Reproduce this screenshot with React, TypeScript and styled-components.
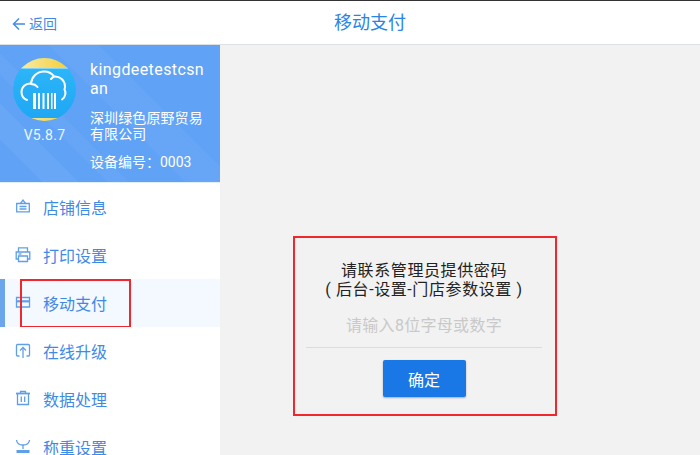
import {FC, ReactNode} from 'react'
import styled, {createGlobalStyle} from 'styled-components'

const FONT = `"Roboto", "Noto Sans CJK SC", sans-serif`

const GlobalStyle = createGlobalStyle`
  html, body {
    margin: 0;
    padding: 0;
    height: 100%;
    overflow: hidden;
    background: #f2f2f2;
    font-family: ${FONT};
  }
`

const menu: {label: string; icon: ReactNode; active?: boolean}[] = [
   {
      label: '店铺信息',
      icon: (
         <>
            <path d="M3.700 6.500h12.600v8.300H3.700z"/>
            <path d="M7.500 6.500 10 3l2.500 3.500"/>
            <path d="M6.500 9.500h7M6.500 12h7"/>
         </>
      ),
   },
   {
      label: '打印设置',
      icon: (
         <>
            <path d="M5.500 7V2.800h9V7"/>
            <path d="M5.500 14H3.200V7h13.600v7h-2.300"/>
            <path d="M5.500 11h9v5.500h-9z"/>
            <path d="M5.500 9h3"/>
         </>
      ),
   },
   {
      label: '移动支付',
      active: true,
      icon: (
         <>
            <path d="M3.500 4.500h13v9.500h-13z"/>
            <path d="M3.500 8.300h13" strokeWidth={2.200}/>
         </>
      ),
   },
   {
      label: '在线升级',
      icon: (
         <>
            <path d="M6.500 15H4.500q-1 0-1-1V4.500q0-1 1-1h11q1 0 1 1V14q0 1-1 1h-2"/>
            <path d="M10 17V6.500"/>
            <path d="M7 9.500 10 6.500l3 3"/>
         </>
      ),
   },
   {
      label: '数据处理',
      icon: (
         <>
            <path d="M3 4.500h14" strokeWidth={1.800}/>
            <path d="M7.500 4V2.500h5V4"/>
            <path d="M4.500 5v10.500h11V5"/>
            <path d="M8.300 7.500v5.500M11.700 7.500v5.500"/>
         </>
      ),
   },
   {
      label: '称重设置',
      icon: (
         <>
            <path d="M3.500 3c.3 3 1.500 5 6.500 5s6.200-2 6.500-5"/>
            <path d="M10 8v4"/>
            <path d="M3.500 14.500h13" strokeWidth={3}/>
         </>
      ),
   },
]

const App: FC = () => {
   return (
      <Page>
         <GlobalStyle/>
         <Header>
            <BackLink>
               <svg width="14" height="14" viewBox="0 0 14 14" fill="none" stroke="#3f8ae6" strokeWidth="1.400">
                  <path d="M13 7H1.500M7 1.500 1.500 7 7 12.500"/>
               </svg>
               返回
            </BackLink>
            <Title>移动支付</Title>
         </Header>
         <Body>
            <Sidebar>
               <Profile>
                  <LogoColumn>
                     <Logo/>
                     <Version>V5.8.7</Version>
                  </LogoColumn>
                  <Info>
                     <Account>kingdeetestcsnan</Account>
                     <Company>深圳绿色原野贸易有限公司</Company>
                     <Device>设备编号：0003</Device>
                  </Info>
               </Profile>
               <Menu>
                  {menu.map(item => (
                     <MenuItem key={item.label} $active={item.active}>
                        <MenuIcon viewBox="0 0 20 20">{item.icon}</MenuIcon>
                        {item.label}
                        {item.active && <MenuMark/>}
                     </MenuItem>
                  ))}
               </Menu>
            </Sidebar>
            <Content>
               <Dialog>
                  <Prompt>
                     请联系管理员提供密码<br/>( 后台-设置-门店参数设置 )
                  </Prompt>
                  <Password>请输入8位字母或数字</Password>
                  <Confirm>确定</Confirm>
               </Dialog>
            </Content>
         </Body>
      </Page>
   )
}

const Logo: FC = () => (
   <svg width="63" height="63" viewBox="0 0 63 63">
      <defs>
         <clipPath id="disc"><circle cx="31.500" cy="31.500" r="31.500"/></clipPath>
         <linearGradient id="sky" x1="0" y1="0" x2="0" y2="1">
            <stop offset="0" stopColor="#2fb8f8"/>
            <stop offset="1" stopColor="#1ea6f4"/>
         </linearGradient>
         <linearGradient id="sun" x1="0" y1="0" x2="1" y2="0">
            <stop offset="0.150" stopColor="#f7e9a0"/>
            <stop offset="0.850" stopColor="#f6cf3c"/>
         </linearGradient>
      </defs>
      <g clipPath="url(#disc)">
         <rect width="63" height="63" fill="url(#sky)"/>
         <rect width="63" height="10" fill="url(#sun)"/>
         <rect y="10" width="63" height="1" fill="#7fd4f8"/>
         <rect y="60" width="63" height="3" fill="url(#sun)"/>
      </g>
      <path
         d="M14 42c-3-1-5.500-4-5.500-8 0-5 4-9 9.500-8.500C18.500 19 24 13.500 31 13.500c4 0 8 2 10 5 6-.5 11 4 11 10 0 1-.200 2-.500 3 1.500 2.500 1.500 7-2.500 10"
         fill="none" stroke="#fff" strokeWidth="2" strokeLinecap="round"
      />
      <path d="M18 26c2.500 0 5 1 6.500 3M38 21c1-1.200 2-2 3-2.500" fill="none" stroke="#fff" strokeWidth="2" strokeLinecap="round"/>
      <path d="M20 35h3v16h-3zM25 35h2v16h-2zM29.500 35h2v16h-2zM34 35h2v16h-2zM38 35h1.500v16H38zM41 35h2v16h-2z" fill="#fff"/>
   </svg>
)

export default App

const Page = styled.div`
  width: 700px;
  height: 455px;
  overflow: hidden;
  display: flex;
  flex-direction: column;
  border-top: 1px solid #333;
  box-sizing: border-box;
`

const Header = styled.header`
  flex: none;
  height: 44px;
  box-sizing: border-box;
  padding-left: 40px;
  background: #fff;
  border-bottom: 1px solid #dcdfe4;
  display: flex;
  align-items: center;
  justify-content: center;
  position: relative;
`

const BackLink = styled.div`
  position: absolute;
  left: 12px;
  top: 15px;
  display: flex;
  align-items: center;
  gap: 3px;
  color: #3f8ae6;
  font-size: 14px;
  line-height: 16px;
`

const Title = styled.h1`
  margin: 0;
  color: #2a84e6;
  font-size: 18px;
  font-weight: 400;
  line-height: 44px;
`

const Body = styled.div`
  flex: 1;
  min-height: 0;
  display: flex;
`

const Sidebar = styled.aside`
  flex: none;
  width: 220px;
  background: #fff;
  overflow: hidden;
`

const Profile = styled.section`
  height: 138px;
  box-sizing: border-box;
  padding: 13px 12px 0 13px;
  display: flex;
  gap: 14px;
  color: #fff;
  background: linear-gradient(
    45deg,
    rgba(255, 255, 255, 0) 0 12%,
    rgba(255, 255, 255, 0.05) 12% 22%,
    rgba(255, 255, 255, 0) 22% 30%,
    rgba(255, 255, 255, 0.04) 30% 36%,
    rgba(255, 255, 255, 0) 36% 52%,
    rgba(255, 255, 255, 0.04) 52% 66%,
    rgba(255, 255, 255, 0) 66% 100%
  ), #60a2f6;
  border-bottom: 1px solid #e3eefc;
`

const LogoColumn = styled.div`
  flex: none;
  width: 63px;
  display: flex;
  flex-direction: column;
  align-items: center;
`

const Version = styled.div`
  margin-top: 6px;
  font-size: 14px;
  line-height: 16px;
  letter-spacing: 0.3px;
  color: #eef5ff;
  white-space: nowrap;
`

const Info = styled.div`
  flex: 1;
  min-width: 0;
  padding-top: 2px;
`

const Account = styled.div`
  font-size: 16px;
  line-height: 19px;
  letter-spacing: 0.4px;
  word-break: break-all;
  width: 116px;
`

const Company = styled.div`
  margin-top: 12px;
  font-size: 14px;
  line-height: 16px;
  letter-spacing: 0.1px;
  width: 116px;
`

const Device = styled.div`
  margin-top: 12px;
  font-size: 14px;
  line-height: 17px;
  white-space: nowrap;
`

const Menu = styled.nav`
  display: flex;
  flex-direction: column;
`

const MenuItem = styled.div<{$active?: boolean}>`
  flex: none;
  height: 48px;
  box-sizing: border-box;
  padding-left: 13px;
  display: flex;
  align-items: center;
  gap: 10px;
  position: relative;
  color: #3f8ae6;
  font-size: 16px;
  background: ${p => (p.$active ? '#f4f8ff' : '#fff')};

  ${p => p.$active && `
    &::before {
      content: '';
      position: absolute;
      left: 0;
      top: 0;
      bottom: 0;
      width: 5px;
      background: #6ba6ec;
    }
  `}
`

const MenuIcon = styled.svg`
  flex: none;
  width: 20px;
  height: 20px;
  fill: none;
  stroke: #5f9fe8;
  stroke-width: 1.300;
`

const MenuMark = styled.div`
  position: absolute;
  left: 20px;
  top: 0;
  width: 111px;
  height: 49px;
  box-sizing: border-box;
  border: 2px solid #f0282d;
`

const Content = styled.main`
  flex: 1;
  min-width: 0;
  background: #f2f2f2;
  padding: 191px 0 0 73px;
`

const Dialog = styled.section`
  width: 264px;
  height: 180px;
  box-sizing: border-box;
  border: 2px solid #f0282d;
  padding: 23px 13px 0 11px;
  display: flex;
  flex-direction: column;
  align-items: center;
`

const Prompt = styled.p`
  margin: 0;
  color: #222;
  font-size: 16px;
  line-height: 19px;
  letter-spacing: 0.6px;
  text-align: center;
  white-space: nowrap;
`

const Password = styled.div`
  width: 100%;
  height: 49px;
  box-sizing: border-box;
  border-bottom: 1px solid #dcdcdc;
  color: #c9c9c9;
  font-size: 16px;
  line-height: 54px;
  letter-spacing: 0.3px;
  text-align: center;
`

const Confirm = styled.button`
  margin: 12px 0 0;
  width: 83px;
  height: 37px;
  border: 0;
  border-radius: 2px;
  background: #1a78e6;
  box-shadow: 0 1px 2px rgba(0, 0, 0, 0.3);
  color: #fff;
  font-family: inherit;
  font-size: 16px;
`
